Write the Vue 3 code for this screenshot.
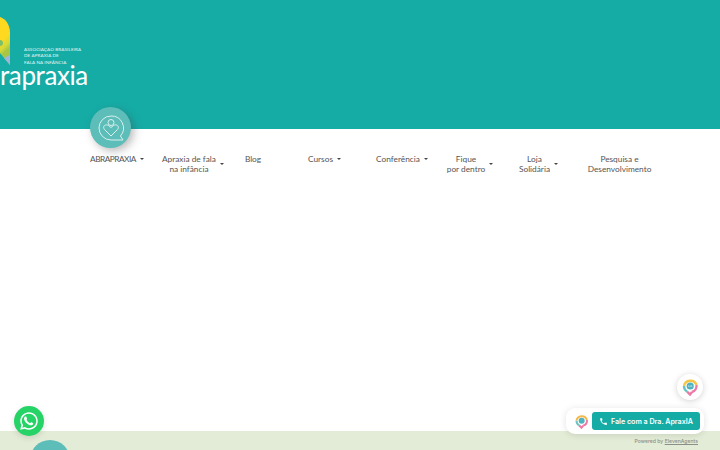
<script setup>
const navItems = [
  { lines: ['ABRAPRAXIA'], caret: true, tight: true },
  { lines: ['Apraxia de fala', 'na infância'], caret: true },
  { lines: ['Blog'], caret: false },
  { lines: ['Cursos'], caret: true },
  { lines: ['Conferência'], caret: true },
  { lines: ['Fique', 'por dentro'], caret: true },
  { lines: ['Loja', 'Solidária'], caret: true },
  { lines: ['Pesquisa e', 'Desenvolvimento'], caret: false },
]
</script>

<template>
  <div class="page">
    <header class="top">
      <div class="logo">
        <svg class="logo-mark" width="10" height="50" viewBox="0 0 10 50">
          <defs>
            <linearGradient id="markFill" x1="0" y1="0" x2="0.2" y2="1">
              <stop offset="0.5" stop-color="#ffd91f" />
              <stop offset="0.68" stop-color="#d3da3a" />
              <stop offset="0.8" stop-color="#a9c544" />
            </linearGradient>
          </defs>
          <path d="M0 2 C6 4 10 10 10 18 V50 L0 38 Z" fill="url(#markFill)" />
          <path d="M4 43 L10 40 V50 Z" fill="#9fb4d8" />
          <circle cx="0" cy="28" r="3" fill="#7cc06a" />
        </svg>
        <div class="logo-text">
          <div class="logo-small">ASSOCIAÇÃO BRASILEIRA<br />DE APRAXIA DE<br />FALA NA INFÂNCIA</div>
          <div class="logo-name">rapraxia</div>
        </div>
      </div>
    </header>

    <nav class="menu">
      <span class="menu-badge">
        <svg width="30" height="30" viewBox="0 0 30 30" fill="none" stroke="#d9f1ef" stroke-width="1">
          <path d="M15 3 A12 12 0 1 0 15 27 H27 L24.400 23 A12 12 0 0 0 15 3 Z" />
          <circle cx="15" cy="9.500" r="3" />
          <path d="M15 23 L8.500 16.500 C6 13.500 9.500 10.500 12.500 12.500 L15 14.500 L17.500 12.500 C20.500 10.500 24 13.500 21.500 16.500 Z" />
        </svg>
      </span>
      <a v-for="item in navItems" :key="item.lines[0]" class="menu-item">
        <span class="menu-label" :class="{ tight: item.tight }">
          <span v-for="line in item.lines" :key="line">{{ line }}</span>
        </span>
        <i v-if="item.caret" class="caret"></i>
      </a>
    </nav>

    <main class="content"></main>

    <footer class="bottom">
      <span class="bottom-badge"></span>
      <span class="powered">Powered by <u>ElevenAgents</u></span>
    </footer>

    <a class="whatsapp">
      <svg width="20" height="20" viewBox="0 0 24 24">
        <path fill="#fff" d="M12 1.500C6.200 1.500 1.500 6.200 1.500 12c0 1.900.5 3.700 1.400 5.200L1.400 22.600l5.500-1.400c1.500.8 3.300 1.300 5.100 1.300 5.800 0 10.500-4.700 10.500-10.500S17.800 1.500 12 1.500Zm0 19.100c-1.600 0-3.200-.4-4.500-1.200l-.3-.2-3.200.8.9-3.100-.2-.3C3.800 15.200 3.300 13.600 3.300 12c0-4.800 3.900-8.700 8.700-8.700s8.700 3.900 8.700 8.700-3.900 8.600-8.700 8.600Z" />
        <path fill="#fff" d="M16.800 14.300c-.3-.1-1.500-.8-1.800-.9-.2-.1-.4-.1-.6.100-.2.300-.7.900-.8 1-.1.200-.3.200-.6.100-1.400-.7-2.900-1.800-3.900-3.700-.1-.3 0-.4.100-.6l.5-.6c.1-.2.100-.4 0-.5l-.8-2c-.2-.5-.5-.5-.7-.5h-.5c-.2 0-.5.100-.7.300-.3.300-1 1-1 2.300s1 2.700 1.100 2.900c.1.200 1.900 3 4.700 4.200 1.700.7 2.400.8 3.300.6.500-.1 1.500-.6 1.800-1.200.2-.6.200-1.100.1-1.200 0-.1-.2-.2-.5-.3Z" />
      </svg>
    </a>

    <div class="agent-bubble">
      <svg width="18" height="18" viewBox="0 0 18 18" fill="none" stroke-width="2.400">
        <path d="M3 8 A6.500 6.500 0 0 1 15.500 7" stroke="#f4c64a" />
        <path d="M15.500 7 A6.500 6.500 0 0 1 11 14" stroke="#ea7aa6" />
        <path d="M11 14 L9 16.500 L6 13.500" stroke="#ea7aa6" />
        <path d="M3 8 A6.500 6.500 0 0 0 6 13.500" stroke="#6cc3c4" />
        <circle cx="9.200" cy="8" r="3.600" fill="#4fb3bf" stroke="none" />
        <circle cx="7.700" cy="8" r=".6" fill="#fff" stroke="none" />
        <circle cx="9.200" cy="8" r=".6" fill="#fff" stroke="none" />
        <circle cx="10.700" cy="8" r=".6" fill="#fff" stroke="none" />
      </svg>
    </div>

    <div class="agent-bar">
      <svg width="15" height="15" viewBox="0 0 18 18" fill="none" stroke-width="2.400">
        <path d="M3 8 A6.500 6.500 0 0 1 15.500 7" stroke="#f4b94a" />
        <path d="M15.500 7 A6.500 6.500 0 0 1 11 14" stroke="#ea7aa6" />
        <path d="M11 14 L9 16.500 L6 13.500" stroke="#ea7aa6" />
        <path d="M3 8 A6.500 6.500 0 0 0 6 13.500" stroke="#6cc3c4" />
        <circle cx="9.200" cy="8" r="3.600" fill="#4fb3bf" stroke="none" />
      </svg>
      <button class="agent-button">
        <svg width="9" height="9" viewBox="0 0 24 24">
          <path fill="#fff" d="M6.600 10.800c1.400 2.800 3.800 5.100 6.600 6.600l2.200-2.200c.3-.3.700-.4 1-.2 1.100.4 2.300.6 3.600.6.600 0 1 .4 1 1V20c0 .6-.4 1-1 1C10.600 21 3 13.400 3 4c0-.6.400-1 1-1h3.500c.6 0 1 .4 1 1 0 1.300.2 2.500.6 3.600.1.300 0 .7-.2 1l-2.300 2.200Z" />
        </svg>
        Fale com a Dra. ApraxIA
      </button>
    </div>
  </div>
</template>

<style scoped>
.page {
  position: relative;
  height: 450px;
  overflow: hidden;
  display: flex;
  flex-direction: column;
  background: #fff;
  font-family: Lato, "Open Sans", sans-serif;
}

.top {
  height: 129px;
  flex: none;
  background: #16aca6;
  display: flex;
  align-items: flex-start;
}

.logo {
  display: flex;
  padding-top: 15px;
}

.logo-text {
  margin: 31px 0 0 -10px;
  color: #fff;
}

.logo-small {
  margin-left: 24px;
  font-size: 4.600px;
  line-height: 6.300px;
  letter-spacing: .1px;
  opacity: .9;
}

.logo-name {
  font-size: 26px;
  line-height: 21px;
  font-weight: 400;
  letter-spacing: -.4px;
}

.menu {
  position: relative;
  flex: none;
  display: grid;
  grid-template-columns: 76px 76px 44px 99px 56px 80px 57px 105px;
  align-items: start;
  padding: 25px 0 0 79px;
  height: 50px;
}

.menu-badge {
  position: absolute;
  left: 90px;
  top: -22px;
  width: 41px;
  height: 41px;
  border-radius: 50%;
  background: #5cbdb9;
  box-shadow: 3px 3px 8px rgba(60, 60, 60, .35);
  display: flex;
  align-items: center;
  justify-content: center;
}

.menu-item {
  display: flex;
  align-items: center;
  justify-content: center;
  gap: 4px;
  color: #555;
  font-size: 8.300px;
  line-height: 10px;
}

.menu-label {
  display: flex;
  flex-direction: column;
  align-items: center;
  white-space: nowrap;
}

.menu-label.tight {
  letter-spacing: -.5px;
}

.caret {
  width: 0;
  height: 0;
  border-top: 2.500px solid #444;
  border-left: 2.500px solid transparent;
  border-right: 2.500px solid transparent;
}

.content {
  flex: 1;
}

.bottom {
  position: relative;
  flex: none;
  height: 19px;
  background: #e3ecd6;
}

.bottom-badge {
  position: absolute;
  left: 30px;
  top: 9px;
  width: 40px;
  height: 40px;
  border-radius: 50%;
  background: #5cbdb9;
}

.powered {
  position: absolute;
  right: 22px;
  top: 7px;
  font-family: Inter, sans-serif;
  font-size: 5.100px;
  font-weight: 500;
  line-height: 7px;
  color: #8a8f8a;
}

.whatsapp {
  position: absolute;
  left: 14px;
  top: 406px;
  width: 30px;
  height: 30px;
  border-radius: 50%;
  background: #25d366;
  box-shadow: 0 2px 6px rgba(0, 0, 0, .12);
  display: flex;
  align-items: center;
  justify-content: center;
}

.agent-bubble {
  position: absolute;
  left: 677px;
  top: 374px;
  width: 26px;
  height: 26px;
  border-radius: 50%;
  background: #fff;
  box-shadow: 0 1px 6px rgba(0, 0, 0, .18);
  display: flex;
  align-items: center;
  justify-content: center;
}

.agent-bar {
  position: absolute;
  left: 566px;
  top: 408px;
  width: 138px;
  height: 26px;
  box-sizing: border-box;
  padding: 0 4px 0 8px;
  border-radius: 9px;
  background: #fff;
  box-shadow: 0 1px 7px rgba(0, 0, 0, .12);
  display: flex;
  align-items: center;
  justify-content: space-between;
}

.agent-button {
  width: 108px;
  height: 18px;
  border: none;
  border-radius: 3px;
  padding: 0 0 0 7px;
  background: #16aca6;
  color: #fff;
  font-family: Inter, sans-serif;
  font-size: 7.100px;
  font-weight: 600;
  display: flex;
  align-items: center;
  gap: 3px;
}
</style>
